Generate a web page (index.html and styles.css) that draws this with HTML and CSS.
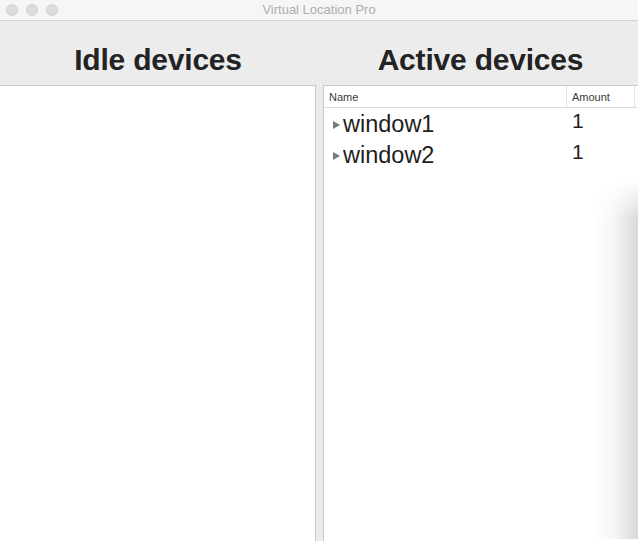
FILE: index.html
```html
<!DOCTYPE html>
<html>
<head>
<meta charset="utf-8">
<link rel="stylesheet" href="styles.css">
</head>
<body>
<div class="window">
  <div class="titlebar">
    <div class="lights"><span class="light"></span><span class="light"></span><span class="light"></span></div>
    <div class="title">Virtual Location Pro</div>
  </div>
  <div class="main">
    <section class="col">
      <h1 class="heading">Idle devices</h1>
      <div class="panel panel-left"></div>
    </section>
    <section class="col">
      <h1 class="heading">Active devices</h1>
      <div class="panel panel-right">
        <div class="thead">
          <div class="th th-name">Name</div>
          <div class="th th-amount">Amount</div>
          <div class="th th-rest"></div>
        </div>
        <div class="row">
          <div class="cell-name"><span class="tri"></span>window1</div>
          <div class="cell-amount">1</div>
        </div>
        <div class="row">
          <div class="cell-name"><span class="tri"></span>window2</div>
          <div class="cell-amount">1</div>
        </div>
      </div>
    </section>
  </div>
  <div class="shadow"></div>
</div>
</body>
</html>
```

FILE: styles.css
```css
html, body {
  margin: 0;
  padding: 0;
}
body {
  width: 638px;
  height: 541px;
  overflow: hidden;
  font-family: "Liberation Sans", Arial, sans-serif;
  background: #ececec;
}
.window {
  position: relative;
  width: 638px;
  height: 541px;
  display: flex;
  flex-direction: column;
}
.titlebar {
  height: 20px;
  flex: none;
  background: #f6f6f6;
  border-bottom: 1px solid #d3d3d3;
  display: flex;
  align-items: center;
  position: relative;
}
.lights {
  display: flex;
  gap: 8px;
  padding-left: 6px;
}
.light {
  width: 12px;
  height: 12px;
  border-radius: 50%;
  background: #dcdcdc;
  border: 0.5px solid #d2d2d2;
  box-sizing: border-box;
}
.title {
  position: absolute;
  left: 0;
  right: 0;
  top: 0;
  height: 20px;
  line-height: 20px;
  text-align: center;
  font-family: "Liberation Sans", Arial, sans-serif;
  font-size: 13px;
  color: #adadad;
}
.main {
  flex: 1;
  display: grid;
  grid-template-columns: 316px 315px;
  column-gap: 7px;
  min-height: 0;
}
.col {
  display: flex;
  flex-direction: column;
  min-height: 0;
}
.heading {
  margin: 0;
  height: 64px;
  display: flex;
  align-items: center;
  justify-content: center;
  font-size: 30px;
  font-weight: bold;
  color: #232323;
  padding-top: 14px;
  box-sizing: border-box;
  letter-spacing: -0.2px;
}
.panel {
  flex: 1;
  background: #fff;
  border-top: 1px solid #c9c9c9;
}
.panel-left {
  border-right: 1px solid #c9c9c9;
}
.panel-right {
  border-left: 1px solid #c9c9c9;
}
.thead {
  display: grid;
  grid-template-columns: 242px 68px 1fr;
  height: 21px;
  border-bottom: 1px solid #dcdcdc;
  font-size: 11px;
  color: #3a3a3a;
}
.th {
  display: flex;
  align-items: center;
  padding-left: 5px;
}
.th-amount, .th-rest {
  border-left: 1px solid #e2e2e2;
}
.row {
  display: grid;
  grid-template-columns: 243px 1fr;
  height: 31px;
}
.cell-name {
  display: flex;
  align-items: center;
  padding-left: 9px;
  font-size: 23.5px;
  color: #1e1e1e;
  padding-top: 2px;
}
.tri {
  width: 0;
  height: 0;
  border-top: 4px solid transparent;
  border-bottom: 4px solid transparent;
  border-left: 7px solid #7a7a7a;
  margin-right: 3px;
  margin-top: 1px;
}
.cell-amount {
  padding-left: 5px;
  font-size: 21px;
  color: #2a1e1e;
  padding-top: 1px;
}
.shadow {
  position: absolute;
  right: 0;
  top: 180px;
  bottom: 2px;
  width: 46px;
  background: linear-gradient(to right, rgba(0,0,0,0), rgba(0,0,0,0.03) 45%, rgba(0,0,0,0.15));
  border-top-left-radius: 40px 30px;
  -webkit-mask-image: linear-gradient(to bottom, rgba(0,0,0,0), #000 40px);
  mask-image: linear-gradient(to bottom, rgba(0,0,0,0), #000 40px);
}
```
